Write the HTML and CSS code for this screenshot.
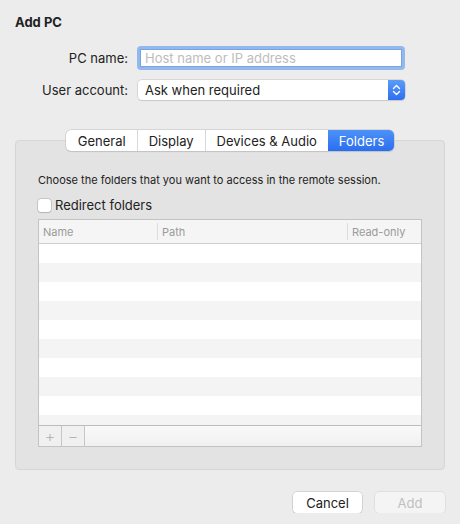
FILE: index.html
```html
<!DOCTYPE html>
<html lang="en">
  <head>
    <meta charset="UTF-8" />
    <title>Add PC</title>
    <link rel="stylesheet" href="styles.css">
  </head>
  <body>
    <h1 class="title">Add PC</h1>

    <div class="form">
      <label class="form-label" for="pcName">PC name:</label>
      <div class="field-ring">
        <input class="field" id="pcName" type="text" placeholder="Host name or IP address" />
      </div>

      <label class="form-label">User account:</label>
      <div class="popup">
        <span class="popup-text">Ask when required</span>
        <span class="popup-arrows">
          <svg width="9" height="12" viewBox="0 0 9 12">
            <path d="M1.5 4.5 L4.5 1.5 L7.5 4.5 M1.5 7.5 L4.5 10.5 L7.5 7.5" fill="none" stroke="#fff" stroke-width="1.4" stroke-linecap="round" stroke-linejoin="round" />
          </svg>
        </span>
      </div>
    </div>

    <div class="tabs-wrap">
      <div class="tabs">
        <span class="tab">General</span>
        <span class="tab">Display</span>
        <span class="tab">Devices &amp; Audio</span>
        <span class="tab tab-active">Folders</span>
      </div>
    </div>

    <div class="group">
      <p class="hint">Choose the folders that you want to access in the remote session.</p>
      <label class="check-row">
        <span class="checkbox"></span>
        Redirect folders
      </label>

      <div class="table">
        <div class="table-head">
          <span class="col col-name">Name</span>
          <span class="col col-path">Path</span>
          <span class="col col-ro">Read-only</span>
        </div>
        <div class="table-body">
          <div class="row"></div>
          <div class="row"></div>
          <div class="row"></div>
          <div class="row"></div>
          <div class="row"></div>
          <div class="row"></div>
          <div class="row"></div>
          <div class="row"></div>
          <div class="row"></div>
          <div class="row"></div>
        </div>
        <div class="table-foot">
          <span class="foot-btn">+</span>
          <span class="foot-btn">&minus;</span>
        </div>
      </div>
    </div>

    <div class="actions">
      <button class="btn">Cancel</button>
      <button class="btn btn-disabled" disabled>Add</button>
    </div>
  </body>
</html>
```

FILE: styles.css
```css
body {
  margin: 0;
  padding: 0 15px;
  background: #ececec;
  font-family: "Inter", "Roboto", sans-serif;
  font-size: 13px;
  color: #222;
}
.title {
  margin: 0;
  padding-top: 14px;
  font-size: 13px;
  line-height: 16px;
  font-weight: 700;
}

/* top form */
.form {
  margin-top: 16px;
  display: grid;
  grid-template-columns: 113px 268px;
  column-gap: 9px;
  row-gap: 10px;
  align-items: center;
}
.form-label {
  text-align: right;
}
.field-ring {
  height: 24px;
  box-sizing: border-box;
  border: 3px solid #93b8ee;
  border-radius: 4px;
  background: #fff;
}
.field {
  width: 100%;
  height: 100%;
  box-sizing: border-box;
  border: 1px solid #7aa3e4;
  padding: 0 4px;
  font-family: inherit;
  font-size: 13px;
  outline: none;
}
.field::placeholder {
  color: #bdbdbd;
}
.popup {
  margin-left: 1px;
  height: 20px;
  display: flex;
  align-items: center;
  background: #fff;
  border-radius: 4px;
  box-shadow: 0 0 0 0.5px #c2c2c2, 0 1px 1px rgba(0, 0, 0, 0.12);
}
.popup-text {
  flex: 1;
  padding-left: 7px;
}
.popup-arrows {
  width: 17px;
  height: 20px;
  display: flex;
  align-items: center;
  justify-content: center;
  border-radius: 0 4px 4px 0;
  background: linear-gradient(#5a9cf8, #2f6ff0);
}

/* tabs */
.tabs-wrap {
  margin-top: 30px;
  margin-bottom: -11px;
  display: flex;
  justify-content: center;
  position: relative;
  z-index: 1;
}
.tabs {
  display: flex;
  height: 21px;
  border-radius: 5px;
  background: #fff;
  box-shadow: 0 0 0 0.5px #bdbdbd, 0 1px 1px rgba(0, 0, 0, 0.12);
  overflow: hidden;
}
.tab {
  display: flex;
  align-items: center;
  padding: 0 11px;
  border-left: 1px solid #d8d8d8;
}
.tab:first-child {
  border-left: none;
  padding: 0 11px 0 12px;
}
.tab-active {
  border-left: none;
  padding: 0 10px 0 11px;
  color: #fff;
  background: linear-gradient(#4d92f8, #2a6ef0);
}

/* group box */
.group {
  height: 330px;
  box-sizing: border-box;
  padding: 32px 22px 0;
  background: #e3e3e3;
  border: 1px solid #d6d6d6;
  border-radius: 4px;
}
.hint {
  margin: 0;
  font-size: 11px;
  line-height: 14px;
}
.check-row {
  margin-top: 11px;
  display: flex;
  align-items: center;
  gap: 4px;
  height: 14px;
}
.checkbox {
  width: 13px;
  height: 13px;
  background: #fff;
  border-radius: 3px;
  box-shadow: 0 0 0 0.5px #aaa, 0 1px 1px rgba(0, 0, 0, 0.15);
}

/* table */
.table {
  margin-top: 7px;
  height: 228px;
  box-sizing: border-box;
  border: 1px solid #c3c3c3;
  background: #fff;
  display: flex;
  flex-direction: column;
}
.table-head {
  height: 23px;
  display: flex;
  align-items: center;
  background: #f5f5f5;
  border-bottom: 1px solid #cfcfcf;
  font-size: 11px;
  color: #9a9a9a;
}
.col {
  height: 17px;
  display: flex;
  align-items: center;
  padding-left: 4px;
  box-sizing: border-box;
}
.col-name {
  width: 118px;
}
.col-path {
  width: 190px;
  border-left: 1px solid #dcdcdc;
}
.col-ro {
  flex: 1;
  border-left: 1px solid #dcdcdc;
}
.table-body {
  flex: 1;
  overflow: hidden;
}
.row {
  height: 19px;
}
.row:nth-child(even) {
  background: #f4f4f4;
}
.table-foot {
  height: 20px;
  display: flex;
  border-top: 1px solid #bcbcbc;
  background: linear-gradient(#fafafa, #f0f0f0);
}
.foot-btn {
  width: 22px;
  display: flex;
  align-items: center;
  justify-content: center;
  border-right: 1px solid #c6c6c6;
  color: #b5b5b5;
  font-size: 16px;
  font-weight: 300;
  background: #f0f0f0;
}

/* bottom buttons */
.actions {
  margin-top: 22px;
  display: flex;
  justify-content: flex-end;
  gap: 13px;
}
.btn {
  width: 69px;
  height: 21px;
  padding: 0;
  border: none;
  border-radius: 4px;
  background: #fff;
  font-family: inherit;
  font-size: 13px;
  color: #222;
  box-shadow: 0 0 0 0.5px #bcbcbc, 0 1px 1px rgba(0, 0, 0, 0.15);
}
.btn-disabled {
  width: 70px;
  color: #c0c0c0;
  background: #f4f4f4;
  box-shadow: 0 0 0 0.5px #d2d2d2;
}
```
